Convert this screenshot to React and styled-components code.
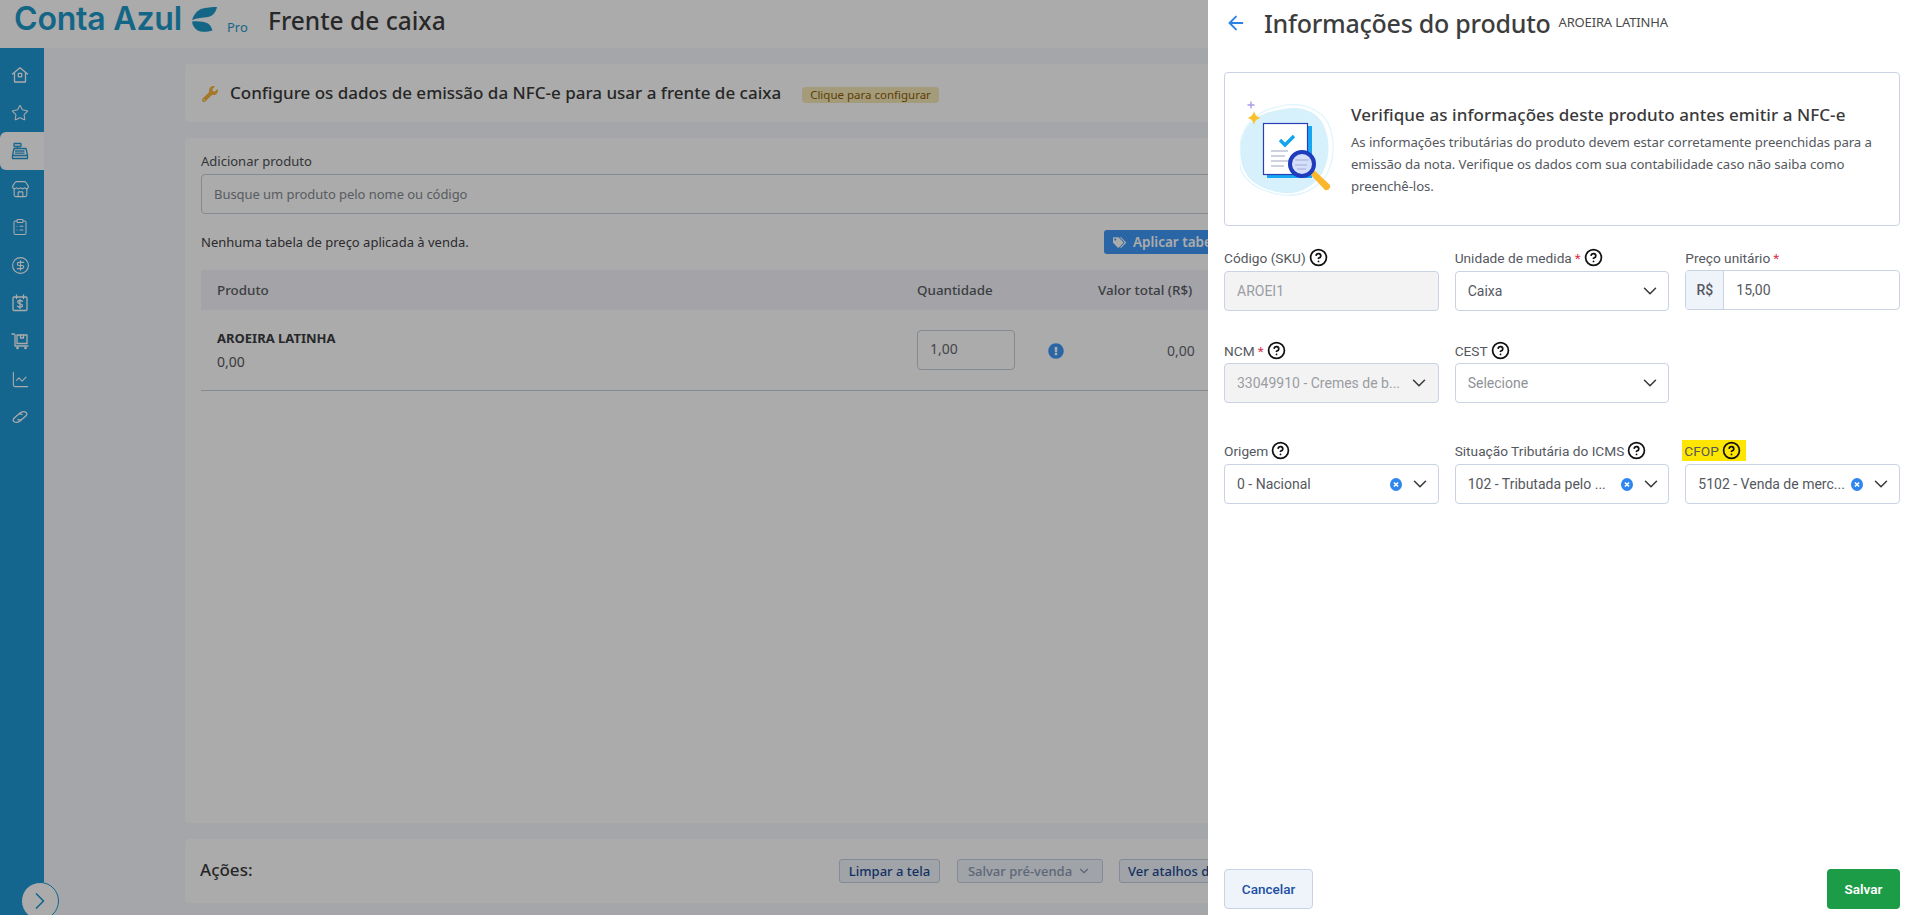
import React from 'react';
import styled, { createGlobalStyle } from 'styled-components';
import { ArrowLeft, CircleHelp, ChevronDown, ChevronRight, Star, Store, ClipboardList, CircleDollarSign, ChartLine } from 'lucide-react';
import { FaWrench, FaTags, FaExclamationCircle } from 'react-icons/fa';

const Global = createGlobalStyle`
  html, body { margin: 0; padding: 0; height: 100%; overflow: hidden; background: #fff; }
  * { box-sizing: border-box; }
  body { font-family: "Noto Sans", sans-serif; color: #3b3d42; }
`;

const Page = styled.div`
  position: relative;
  width: 1912px;
  height: 915px;
  overflow: hidden;
  display: flex;
  flex-direction: column;
  background: #f6f8fe;
`;
const Header = styled.header`
  height: 48px;
  flex: none;
  background: #fff;
  display: flex;
  align-items: flex-start;
  padding-left: 14px;
`;
const Logo = styled.div`
  display: flex;
  align-items: flex-start;
  color: #1e98c8;
`;
const LogoText = styled.span`
  font-family: "Inter", sans-serif;
  font-weight: 600;
  font-size: 32px;
  line-height: 38px;
  letter-spacing: -0.2px;
  width: 178px;
  white-space: nowrap;
`;
const LogoLeaf = styled.svg`
  width: 26px;
  height: 25px;
  margin-top: 7px;
`;
const LogoPro = styled.span`
  font-size: 13px;
  line-height: 16px;
  margin: 19px 0 0 9px;
  width: 22px;
`;
const PageTitle = styled.h1`
  margin: 7px 0 0 19px;
  font-size: 24.5px;
  line-height: 28px;
  font-weight: 500;
  color: #3d3d3d;
`;
const Body = styled.div`
  flex: 1;
  display: flex;
  min-height: 0;
`;
const Rail = styled.nav`
  position: relative;
  width: 44px;
  flex: none;
  background: #1e98d5;
  padding-top: 8px;
  display: flex;
  flex-direction: column;
`;
const RailItem = styled.div`
  height: 38px;
  flex: none;
  display: flex;
  align-items: center;
  justify-content: center;
  padding-right: 4px;
  color: ${p => (p.$active ? '#1e98d5' : '#fff')};
  background: ${p => (p.$active ? '#fff' : 'transparent')};
  border-radius: 6px 0 0 6px;
`;
const RailToggle = styled.button`
  position: absolute;
  left: 21px;
  bottom: -5px;
  width: 38px;
  height: 38px;
  border-radius: 50%;
  border: 1.5px solid #1e98d5;
  background: #fff;
  color: #1e98d5;
  padding: 0;
  display: flex;
  align-items: center;
  justify-content: center;
`;
const Main = styled.main`
  flex: 1;
  padding: 16px 141px 0;
  display: flex;
  flex-direction: column;
  gap: 16px;
`;
const Card = styled.section`
  background: #fff;
  border-radius: 4px;
`;
const NoticeCard = styled(Card)`
  height: 58px;
  flex: none;
  display: flex;
  align-items: center;
  padding-left: 17px;
`;
const WrenchIcon = styled(FaWrench)`
  color: #f5b43c;
  width: 16px;
  height: 16px;
  margin-top: 2px;
`;
const NoticeText = styled.span`
  margin-left: 12px;
  font-size: 17px;
  line-height: 24px;
  font-weight: 500;
  color: #3a3a3a;
  width: 572px;
  flex: none;
  white-space: nowrap;
`;
const Badge = styled.span`
  background: #f4e8b6;
  color: #8c5d08;
  border-radius: 4px;
  height: 16px;
  width: 137px;
  font-size: 11.5px;
  line-height: 16px;
  text-align: center;
  margin-top: 4px;
`;
const SaleCard = styled(Card)`
  flex: 1;
  padding: 13px 16px 0;
`;
const FieldTitle = styled.div`
  font-size: 13px;
  line-height: 20px;
  color: #4c4f55;
`;
const SearchBox = styled.div`
  margin-top: 3px;
  height: 40px;
  border: 1px solid #c5ced9;
  border-radius: 4px;
  padding: 0 12px;
  font-size: 13px;
  letter-spacing: -0.05px;
  line-height: 38px;
  color: #858a91;
`;
const PriceBar = styled.div`
  display: grid;
  grid-template-columns: 903px auto;
  align-items: center;
  height: 24px;
  margin-top: 16px;
  font-size: 13px;
  color: #3f4146;
`;
const ApplyButton = styled.button`
  justify-self: start;
  height: 24px;
  border: 0;
  padding: 0 9px;
  border-radius: 3px;
  background: #3f99f7;
  color: #fff;
  font: 600 13.5px "Noto Sans", sans-serif;
  display: flex;
  align-items: center;
  gap: 7px;
  white-space: nowrap;
`;
const TableHead = styled.div`
  margin-top: 16px;
  height: 40px;
  display: grid;
  grid-template-columns: 700px 181px 1fr;
  align-items: center;
  padding-left: 16px;
  font-size: 13.4px;
  font-weight: 500;
  color: #5a5d63;
  background: #f3f4fb;
`;
const TableRow = styled.div`
  height: 81px;
  border-bottom: 1px solid #c5ced9;
  display: grid;
  grid-template-columns: 700px 98px 33px 16px 1fr;
  align-items: center;
  padding-left: 16px;
`;
const ProductCell = styled.div`
  display: flex;
  flex-direction: column;
  gap: 8px;
`;
const ProductName = styled.span`
  font-size: 13px;
  line-height: 16px;
  font-weight: 700;
  color: #3b3d42;
`;
const ProductPrice = styled.span`
  font-size: 14px;
  line-height: 16px;
  color: #55585e;
`;
const QtyInput = styled.div`
  height: 40px;
  border: 1px solid #c5ced9;
  border-radius: 4px;
  padding-left: 12px;
  font-size: 14px;
  line-height: 36px;
  color: #66696f;
`;
const AlertIcon = styled(FaExclamationCircle)`
  grid-column: 4;
  color: #3f99f7;
  width: 16px;
  height: 16px;
  margin-top: 2px;
`;
const RowValue = styled.span`
  justify-self: start;
  margin-left: 103px;
  font-size: 14px;
  color: #66696f;
`;
const ActionsCard = styled(Card)`
  height: 64px;
  flex: none;
  margin-bottom: 12px;
  display: flex;
  align-items: center;
  padding-left: 15px;
`;
const ActionsTitle = styled.span`
  flex: 0 0 639px;
  font-size: 17px;
  font-weight: 500;
  color: #3a3a3a;
  margin-bottom: 4px;
`;
const ActionButtons = styled.div`
  display: flex;
  gap: 16.5px;
`;
const ActionButton = styled.button`
  height: 24px;
  width: ${p => (p.$w ? `${p.$w}px` : 'auto')};
  padding: 0 8px;
  border: 1px solid #c5d0e2;
  border-radius: 3px;
  background: #eff3fa;
  color: ${p => (p.$muted ? '#8d9ab3' : '#204a94')};
  font: 500 13px "Noto Sans", sans-serif;
  white-space: nowrap;
  display: flex;
  align-items: center;
  justify-content: center;
  gap: 5px;
`;
const Scrim = styled.div`
  position: absolute;
  inset: 0;
  background: rgba(0, 0, 0, 0.33);
`;
const Panel = styled.aside`
  position: absolute;
  top: 0;
  right: 0;
  bottom: 0;
  width: 704px;
  background: #fff;
  padding: 0 12px 6px 16px;
  display: flex;
  flex-direction: column;
`;
const PanelHead = styled.div`
  height: 48px;
  flex: none;
  display: flex;
  align-items: center;
  padding-bottom: 2px;
`;
const BackArrow = styled(ArrowLeft)`
  color: #2b82e4;
  margin-left: 1px;
  width: 22px;
  height: 22px;
  stroke-width: 2;
`;
const PanelTitle = styled.h2`
  margin: 0 0 0 17px;
  font-size: 25px;
  line-height: 32px;
  font-weight: 500;
  letter-spacing: -0.25px;
  color: #3d3d3d;
  white-space: nowrap;
`;
const PanelSub = styled.span`
  margin: 0 0 3px 8px;
  font-size: 13px;
  letter-spacing: -0.15px;
  color: #4a4a4a;
  white-space: nowrap;
`;
const InfoBox = styled.div`
  margin-top: 24px;
  height: 154px;
  flex: none;
  border: 1px solid #c9d3e3;
  border-radius: 4px;
  display: flex;
  align-items: center;
  padding-left: 15px;
`;
const InfoArt = styled.svg`
  width: 96px;
  height: 100px;
  flex: none;
  margin-top: 2px;
`;
const InfoText = styled.div`
  margin: 2px 0 0 15px;
  width: 535px;
`;
const InfoTitle = styled.div`
  font-size: 17px;
  line-height: 24px;
  font-weight: 500;
  letter-spacing: 0.07px;
  color: #3a3a3a;
  margin-bottom: 4px;
  white-space: nowrap;
`;
const InfoBody = styled.div`
  font-size: 13.2px;
  line-height: 22px;
  letter-spacing: -0.07px;
  color: #55585e;
`;
const FormRow = styled.div`
  display: grid;
  grid-template-columns: repeat(3, 1fr);
  column-gap: 16px;
  flex: none;
  margin-top: ${p => p.$top}px;
`;
const Field = styled.div`
  min-width: 0;
`;
const Label = styled.label`
  display: flex;
  width: fit-content;
  align-items: center;
  gap: 3px;
  height: 21px;
  font-family: "Roboto", sans-serif;
  font-size: 13.7px;
  color: #55585e;
  ${p => p.$mark && `
    margin-left: -3px;
    padding: 0 5px 0 2px;
    background: #ffe600;
  `}
`;
const Req = styled.span`
  color: #d8344a;
`;
const Help = styled(CircleHelp)`
  width: 19px;
  height: 19px;
  color: #111;
  stroke-width: 2.2;
`;
const Control = styled.div`
  margin-top: ${p => (p.$gap ?? 3)}px;
  height: 40px;
  border: 1px solid #c9d3e3;
  border-radius: 4px;
  background: ${p => (p.$disabled ? '#f3f3f4' : '#fff')};
  display: flex;
  align-items: center;
  padding-left: 12px;
  font-family: "Roboto", sans-serif;
  font-size: 14px;
  color: ${p => (p.$disabled ? '#9a9da2' : '#55585e')};
`;
const ControlText = styled.span`
  flex: 0 0 ${p => p.$w}px;
  width: ${p => p.$w}px;
  white-space: nowrap;
  color: ${p => (p.$placeholder ? '#8e9197' : 'inherit')};
`;
const ClearDot = styled.svg`
  width: 12px;
  height: 13px;
  flex: none;
  margin-left: ${p => p.$left}px;
`;
const Chevron = styled(ChevronDown)`
  width: 22px;
  height: 22px;
  flex: none;
  margin-left: ${p => p.$left}px;
  color: #3a3a3a;
  stroke-width: 1.7;
`;
const Prefix = styled.span`
  width: 38px;
  height: 38px;
  margin-left: -12px;
  flex: none;
  background: #eff3fa;
  border-right: 1px solid #c9d3e3;
  border-radius: 3px 0 0 3px;
  display: flex;
  align-items: center;
  justify-content: center;
  font-weight: 500;
  color: #55585e;
`;
const PriceValue = styled.span`
  margin-left: 12px;
`;
const PanelFoot = styled.div`
  margin-top: auto;
  display: flex;
  justify-content: space-between;
  height: 40px;
  flex: none;
`;
const CancelButton = styled.button`
  width: 89px;
  border: 1px solid #c9d3e3;
  border-radius: 4px;
  background: #eff3fa;
  color: #204fa5;
  font: 500 13.5px "Roboto", sans-serif;
`;
const SaveButton = styled.button`
  width: 73px;
  border: 0;
  border-radius: 4px;
  background: #1d9c48;
  color: #fff;
  font: 600 13.5px "Roboto", sans-serif;
`;

const Stroke = ({ children, size = 20 }) => (
  <svg width={size} height={size} viewBox="0 0 20 20" fill="none" stroke="currentColor" strokeWidth="1.3" strokeLinecap="round" strokeLinejoin="round">{children}</svg>
);
const HomeIcon = () => <Stroke><path d="M2.500 9 10 2.800 17.500 9M4.500 7.600v9.400h11V7.600" /><rect x="8.300" y="8.400" width="3.400" height="3.400" rx=".6" /></Stroke>;
const RegisterIcon = () => <Stroke><rect x="4" y="2.500" width="7" height="3" rx=".5" /><path d="M7.500 5.500v2M4 7.500h12l1.500 7h-15zM2.500 14.500v3h15v-3" /><path d="M5.500 10h9M5.500 12.200h9" strokeDasharray="1.300 1.100" /></Stroke>;
const CalDollarIcon = () => <Stroke><rect x="3" y="4" width="14" height="13.500" rx="1" /><path d="M6.500 2v3.500M13.500 2v3.500" /><path d="M12.500 8.400c-.6-.7-1.400-.9-2.500-.9-1.300 0-2.300.6-2.300 1.600 0 2.400 4.800 1.200 4.800 3.500 0 1-1 1.600-2.500 1.600-1.100 0-2-.3-2.600-1M10 6.500v9" /></Stroke>;
const CartIcon = () => <Stroke><path d="M2 3h2l1 1v11h13" /><rect x="7" y="4" width="10" height="8.500" /><path d="M10.500 4v3h3V4" /><circle cx="7.500" cy="17" r=".7" /><circle cx="15.500" cy="17" r=".7" /></Stroke>;
const LinkIcon = () => <Stroke><path d="M9 6.800c1.500-1.400 4-2.400 6-2 2 .5 2.400 2.300 1 4l-3 2.700c-1.600 1.400-3.800 1.800-5 1" /><path d="M11 13.200c-1.500 1.400-4 2.400-6 2-2-.5-2.400-2.300-1-4l3-2.700c1.600-1.400 3.800-1.800 5-1" /></Stroke>;

const Clear = ({ left }) => (
  <ClearDot $left={left} viewBox="0 0 12 13">
    <ellipse cx="6" cy="6.500" rx="6" ry="6.500" fill="#2f86ee" />
    <path d="M3.900 4.500 8.100 8.500M8.100 4.500 3.900 8.500" stroke="#fff" strokeWidth="1.600" />
  </ClearDot>
);

const Illustration = () => (
  <InfoArt viewBox="0 0 96 100">
    <path d="M44 9c16-3 30 1 38 13 8 14 9 34 1 50-8 14-24 23-40 21C27 91 10 84 4 70-2 56-1 38 8 26 16 15 30 11 44 9z" fill="#d6f1fc" />
    <path d="M46 5c18-2 34 4 42 18 7 15 7 35-1 51-9 15-27 23-44 21C27 93 7 86 1 70-3 54-1 35 10 22 19 11 33 7 46 5z" fill="none" stroke="#dff4fc" strokeWidth="1.200" />
    <path d="M11 1.500v7M7.500 5h7" stroke="#a99cf0" strokeWidth="1.400" />
    <path d="M14 11c1 4 2.500 5.500 6.500 7-4 1-5.500 2.500-6.500 7-1-4.500-2.500-6-6.500-7 4-1.500 5.500-3 6.500-7z" fill="#fbc02d" />
    <rect x="27" y="26" width="45" height="52" fill="#16a6f2" />
    <rect x="23.500" y="23.500" width="44" height="51" fill="#fff" stroke="#2a3fb5" strokeWidth="1.200" />
    <path d="m40 40 5 5 9-9" fill="none" stroke="#12a5ee" strokeWidth="3.400" />
    <path d="M31 51h17M31 56h14M31 61h18M31 66h13" stroke="#9da6bd" strokeWidth="1.100" />
    <path d="m70 74 4-4 16 15c1 3-2 6-5 5z" fill="#fbb62c" />
    <circle cx="62" cy="64" r="12" fill="#d5defa" stroke="#1f3cbd" strokeWidth="4" />
    <path d="M55 60h14M55 65h12M57 69h9" stroke="#a3add0" strokeWidth="1" />
  </InfoArt>
);

export default function App() {
  return (
    <Page>
      <Global />
      <Header>
        <Logo>
          <LogoText>Conta Azul</LogoText>
          <LogoLeaf viewBox="0 0 26 25">
            <path d="M9 2c5-1.500 11-2 16-2-1 5-4 9-9 10-5 .8-11 .8-16 3C2 7 5 4 9 2z" fill="currentColor" />
            <path d="M0 14.500c6-.5 12 0 16 2 2 1.500 3.500 3.500 4.500 7-5 1.500-11 2-15 0-3-2-5-5-5.500-9z" fill="currentColor" />
          </LogoLeaf>
          <LogoPro>Pro</LogoPro>
        </Logo>
        <PageTitle>Frente de caixa</PageTitle>
      </Header>
      <Body>
        <Rail>
          <RailItem><HomeIcon /></RailItem>
          <RailItem><Star size={18} strokeWidth={1.4} /></RailItem>
          <RailItem $active><RegisterIcon /></RailItem>
          <RailItem><Store size={19} strokeWidth={1.4} /></RailItem>
          <RailItem><ClipboardList size={18} strokeWidth={1.4} /></RailItem>
          <RailItem><CircleDollarSign size={19} strokeWidth={1.4} /></RailItem>
          <RailItem><CalDollarIcon /></RailItem>
          <RailItem><CartIcon /></RailItem>
          <RailItem><ChartLine size={19} strokeWidth={1.4} /></RailItem>
          <RailItem><LinkIcon /></RailItem>
          <RailToggle aria-label="Expandir"><ChevronRight size={28} strokeWidth={1.5} /></RailToggle>
        </Rail>
        <Main>
          <NoticeCard>
            <WrenchIcon />
            <NoticeText>Configure os dados de emissão da NFC-e para usar a frente de caixa</NoticeText>
            <Badge>Clique para configurar</Badge>
          </NoticeCard>
          <SaleCard>
            <FieldTitle>Adicionar produto</FieldTitle>
            <SearchBox>Busque um produto pelo nome ou código</SearchBox>
            <PriceBar>
              <span>Nenhuma tabela de preço aplicada à venda.</span>
              <ApplyButton><FaTags size={13} />Aplicar tabela de preço</ApplyButton>
            </PriceBar>
            <TableHead>
              <span>Produto</span>
              <span>Quantidade</span>
              <span>Valor total (R$)</span>
            </TableHead>
            <TableRow>
              <ProductCell>
                <ProductName>AROEIRA LATINHA</ProductName>
                <ProductPrice>0,00</ProductPrice>
              </ProductCell>
              <QtyInput>1,00</QtyInput>
              <AlertIcon />
              <RowValue>0,00</RowValue>
            </TableRow>
          </SaleCard>
          <ActionsCard>
            <ActionsTitle>Ações:</ActionsTitle>
            <ActionButtons>
              <ActionButton $w={101}>Limpar a tela</ActionButton>
              <ActionButton $w={146} $muted>Salvar pré-venda <ChevronDown size={14} /></ActionButton>
              <ActionButton>Ver atalhos do teclado</ActionButton>
            </ActionButtons>
          </ActionsCard>
        </Main>
      </Body>
      <Scrim />
      <Panel>
        <PanelHead>
          <BackArrow />
          <PanelTitle>Informações do produto</PanelTitle>
          <PanelSub>AROEIRA LATINHA</PanelSub>
        </PanelHead>
        <InfoBox>
          <Illustration />
          <InfoText>
            <InfoTitle>Verifique as informações deste produto antes emitir a NFC-e</InfoTitle>
            <InfoBody>As informações tributárias do produto devem estar corretamente preenchidas para a emissão da nota. Verifique os dados com sua contabilidade caso não saiba como preenchê-los.</InfoBody>
          </InfoText>
        </InfoBox>
        <FormRow $top={21}>
          <Field>
            <Label>Código (SKU) <Help /></Label>
            <Control $disabled>AROEI1</Control>
          </Field>
          <Field>
            <Label>Unidade de medida <Req>*</Req> <Help /></Label>
            <Control><ControlText $w={166}>Caixa</ControlText><Chevron $left={5} /></Control>
          </Field>
          <Field>
            <Label>Preço unitário <Req>*</Req></Label>
            <Control $gap={2}><Prefix>R$</Prefix><PriceValue>15,00</PriceValue></Control>
          </Field>
        </FormRow>
        <FormRow $top={29}>
          <Field>
            <Label>NCM <Req>*</Req> <Help /></Label>
            <Control $gap={2} $disabled><ControlText $w={166}>33049910 - Cremes de b...</ControlText><Chevron $left={5} /></Control>
          </Field>
          <Field>
            <Label>CEST <Help /></Label>
            <Control $gap={2}><ControlText $w={166} $placeholder>Selecione</ControlText><Chevron $left={5} /></Control>
          </Field>
        </FormRow>
        <FormRow $top={37}>
          <Field>
            <Label>Origem <Help /></Label>
            <Control>
              <ControlText $w={140}>0 - Nacional</ControlText><Clear left={13} /><Chevron $left={7} />
            </Control>
          </Field>
          <Field>
            <Label>Situação Tributária do ICMS <Help /></Label>
            <Control>
              <ControlText $w={140}>102 - Tributada pelo ...</ControlText><Clear left={13} /><Chevron $left={7} />
            </Control>
          </Field>
          <Field>
            <Label $mark>CFOP <Help /></Label>
            <Control>
              <ControlText $w={147}>5102 - Venda de merc...</ControlText><Clear left={6} /><Chevron $left={7} />
            </Control>
          </Field>
        </FormRow>
        <PanelFoot>
          <CancelButton>Cancelar</CancelButton>
          <SaveButton>Salvar</SaveButton>
        </PanelFoot>
      </Panel>
    </Page>
  );
}
